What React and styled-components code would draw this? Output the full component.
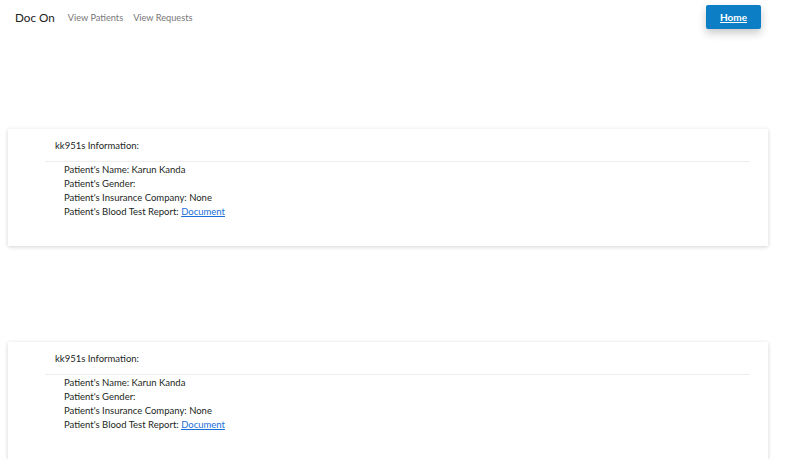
import React from 'react';
import styled, { createGlobalStyle } from 'styled-components';

const GlobalStyle = createGlobalStyle`
    body {
        margin: 0;
        background: #ffffff;
        font-family: Lato, "Noto Sans", sans-serif;
        color: #1c1f23;
    }
`;

const patients = [
    { id: 'kk951s', name: 'Karun Kanda', gender: '', insurance: 'None' },
    { id: 'kk951s', name: 'Karun Kanda', gender: '', insurance: 'None' },
];

const Navbar = () => (
    <Nav>
        <Brand>Doc On</Brand>
        <NavLink>View Patients</NavLink>
        <NavLink>View Requests</NavLink>
        <HomeButton>Home</HomeButton>
    </Nav>
);

const PatientCard = ({ patient }) => (
    <Card>
        <CardHeader>{patient.id} Information:</CardHeader>
        <Divider />
        <InfoList>
            <li>Patient's Name: {patient.name}</li>
            <li>Patient's Gender: {patient.gender}</li>
            <li>Patient's Insurance Company: {patient.insurance}</li>
            <li>Patient's Blood Test Report: <DocLink href="#">Document</DocLink></li>
        </InfoList>
    </Card>
);

const App = () => (
    <>
        <GlobalStyle />
        <Navbar />
        <Main>
            {patients.map((p, i) => (
                <PatientCard key={i} patient={p} />
            ))}
        </Main>
    </>
);

const Nav = styled.nav`
    display: flex;
    align-items: center;
    height: 34px;
    padding: 0 45px 0 15px;
`;

const Brand = styled.span`
    font-size: 11.7px;
    color: #222;
    margin-right: 13px;
`;

const NavLink = styled.span`
    font-size: 9.2px;
    color: #777;
    margin-right: 10px;
`;

const HomeButton = styled.button`
    margin-left: auto;
    width: 55px;
    height: 24px;
    border: none;
    border-radius: 2px;
    background: #0b7ec5;
    color: #fff;
    font-family: inherit;
    font-size: 10px;
    font-weight: 700;
    text-decoration: underline;
    box-shadow: 0 4px 8px rgba(0, 0, 0, 0.22);
    cursor: pointer;
`;

const Main = styled.main`
    display: flex;
    flex-direction: column;
    gap: 96px;
    padding: 95px 38px 0 8px;
`;

const Card = styled.section`
    background: #fff;
    box-shadow: 0 1px 4px rgba(0, 0, 0, 0.18);
    padding: 10px 18px 27px 37px;
`;

const CardHeader = styled.div`
    font-size: 9.5px;
    line-height: 14px;
    padding: 0 0 8px 10px;
`;

const Divider = styled.hr`
    margin: 0;
    border: none;
    border-top: 1px solid #eeeeee;
`;

const InfoList = styled.ul`
    list-style: none;
    margin: 1px 0 0;
    padding-left: 19px;
    font-size: 9.5px;
    line-height: 14px;
`;

const DocLink = styled.a`
    color: #1a6fd8;
    text-decoration: underline;
`;

export default App;
